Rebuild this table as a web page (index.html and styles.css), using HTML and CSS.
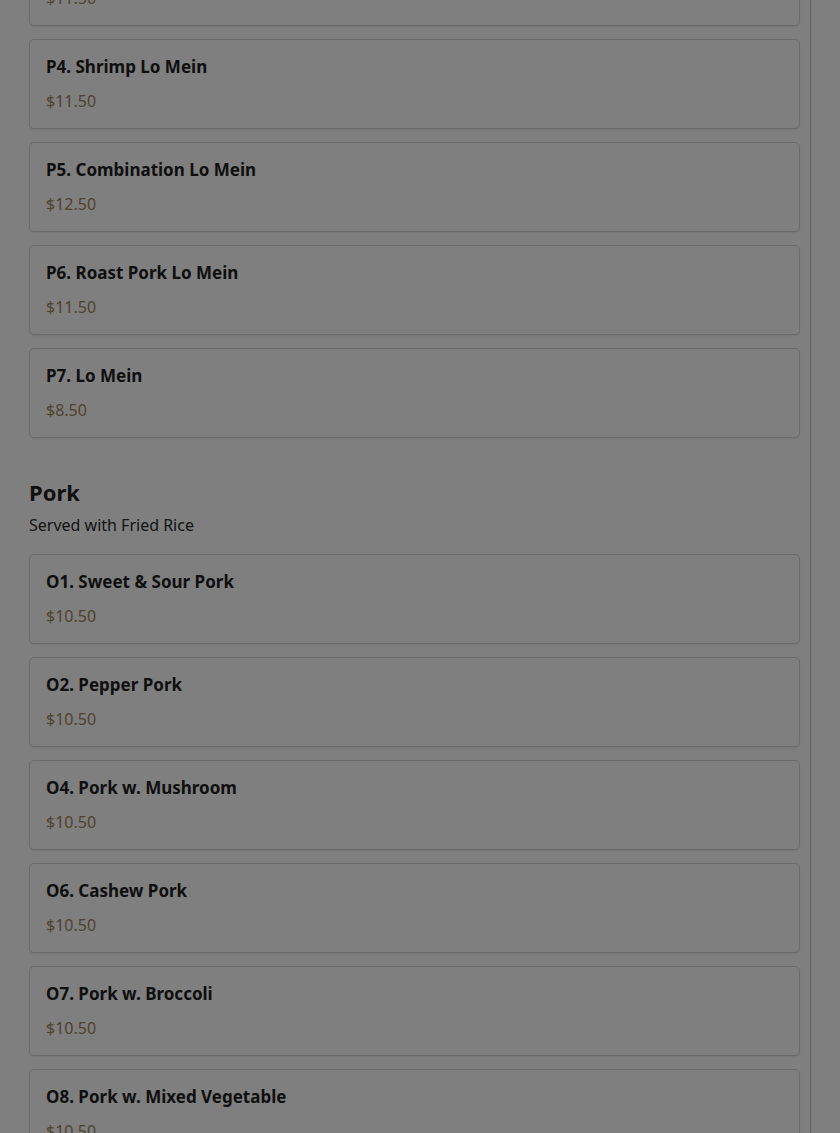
FILE: index.html
```html
<!DOCTYPE html>
<html lang="en">
<head>
<meta charset="utf-8">
<title>Menu</title>
<link rel="stylesheet" href="styles.css">
</head>
<body>
<div class="page">
  <main class="menu">
    <section class="category category-first">
      <div class="items">
        <div class="item"><div class="item-name">P3. Chicken Lo Mein</div><div class="item-price">$11.50</div></div>
        <div class="item"><div class="item-name">P4. Shrimp Lo Mein</div><div class="item-price">$11.50</div></div>
        <div class="item"><div class="item-name">P5. Combination Lo Mein</div><div class="item-price">$12.50</div></div>
        <div class="item"><div class="item-name">P6. Roast Pork Lo Mein</div><div class="item-price">$11.50</div></div>
        <div class="item"><div class="item-name">P7. Lo Mein</div><div class="item-price">$8.50</div></div>
      </div>
    </section>
    <section class="category">
      <h2 class="cat-title">Pork</h2>
      <p class="cat-desc">Served with Fried Rice</p>
      <div class="items">
        <div class="item"><div class="item-name">O1. Sweet &amp; Sour Pork</div><div class="item-price">$10.50</div></div>
        <div class="item"><div class="item-name">O2. Pepper Pork</div><div class="item-price">$10.50</div></div>
        <div class="item"><div class="item-name">O4. Pork w. Mushroom</div><div class="item-price">$10.50</div></div>
        <div class="item"><div class="item-name">O6. Cashew Pork</div><div class="item-price">$10.50</div></div>
        <div class="item"><div class="item-name">O7. Pork w. Broccoli</div><div class="item-price">$10.50</div></div>
        <div class="item"><div class="item-name">O8. Pork w. Mixed Vegetable</div><div class="item-price">$10.50</div></div>
      </div>
    </section>
  </main>
  <aside class="side"></aside>
</div>
<div class="overlay"></div>
</body>
</html>
```
FILE: styles.css
```css
html, body {
  margin: 0;
  padding: 0;
  background: #ffffff;
  font-family: "Noto Sans", "Open Sans", sans-serif;
  color: #222222;
  overflow: hidden;
  height: 1133px;
}
.page {
  display: flex;
  height: 1133px;
}
.menu {
  width: 811px;
  box-sizing: border-box;
  padding: 0 10px 0 29px;
  border-right: 1px solid #c8c8c8;
}
.side {
  flex: 1;
}
.category-first {
  margin-top: -64px;
}
.items {
  display: flex;
  flex-direction: column;
  gap: 13px;
}
.item {
  height: 90px;
  box-sizing: border-box;
  border: 1px solid #d6d6d6;
  border-radius: 5px;
  padding: 15px 16px 0 16px;
  background: #ffffff;
  box-shadow: 0 1px 2px rgba(0,0,0,0.08);
}
.item-name {
  font-size: 17px;
  font-weight: 700;
  line-height: 24px;
  color: #1e1e1e;
}
.item-price {
  margin-top: 12px;
  font-size: 16px;
  line-height: 20px;
  color: #a0855a;
}
.category + .category {
  margin-top: 40px;
}
.cat-title {
  margin: 0;
  font-size: 22px;
  font-weight: 700;
  line-height: 28px;
  color: #1e1e1e;
}
.cat-desc {
  margin: 8px 0 18px;
  font-size: 16px;
  line-height: 22px;
  color: #2a2a2a;
}
.overlay {
  position: fixed;
  inset: 0;
  background: rgba(0,0,0,0.5);
}
```
